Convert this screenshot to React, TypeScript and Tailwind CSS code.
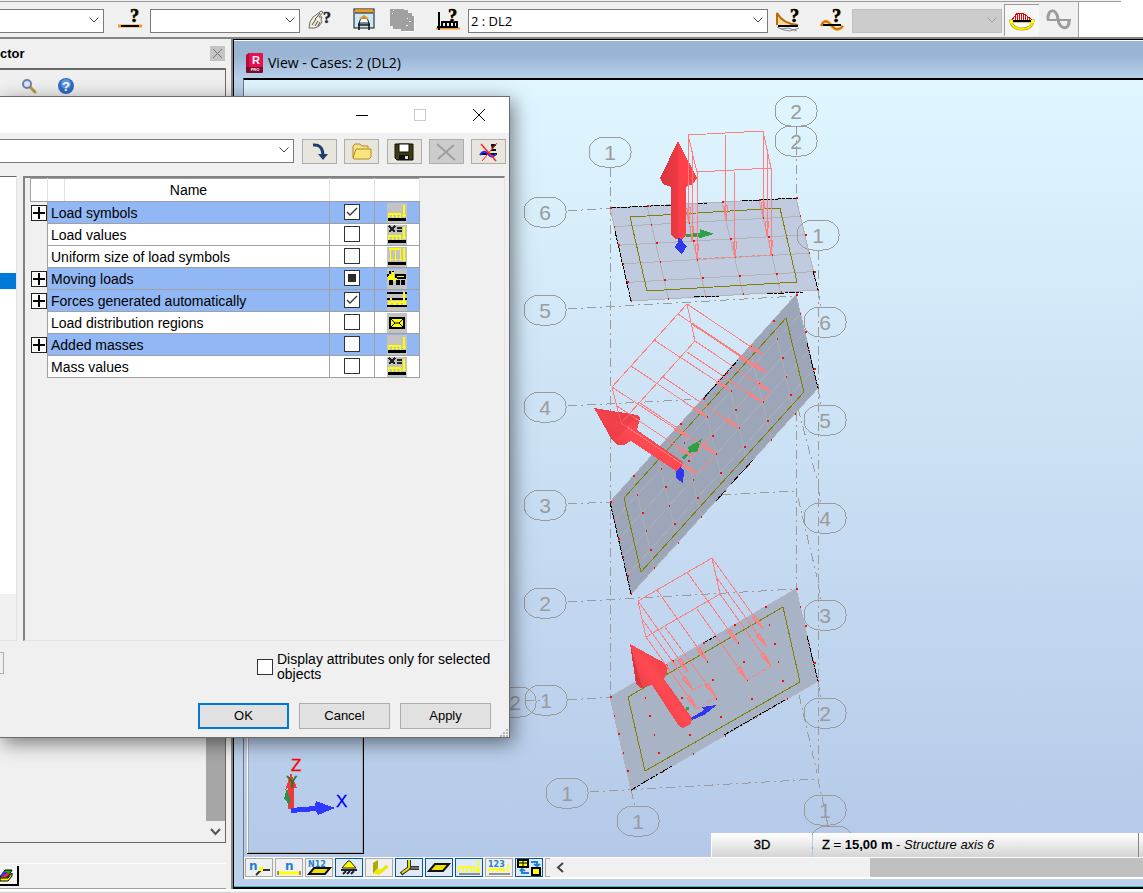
import { useState, type ReactNode } from "react";

type Point = [number, number];

const rows = [
  { name: "Load symbols", group: true, state: "on", icon: "load" },
  { name: "Load values", group: false, state: "off", icon: "values" },
  { name: "Uniform size of load symbols", group: false, state: "off", icon: "uniform" },
  { name: "Moving loads", group: true, state: "mixed", icon: "truck" },
  { name: "Forces generated automatically", group: true, state: "on", icon: "forces" },
  { name: "Load distribution regions", group: false, state: "off", icon: "region" },
  { name: "Added masses", group: true, state: "off", icon: "load" },
  { name: "Mass values", group: false, state: "off", icon: "values" },
];

const plates: {
  corners: [Point, Point, Point, Point];
  inner: string;
  fill: string;
  grid: string;
  nu: number;
  edges: string[];
}[] = [
  {
    corners: [[610, 208], [796, 198], [818, 290], [631, 301]],
    inner: "630,217 780,208 797,282 647,291",
    fill: "#c1cbe0",
    grid: "#b3b3b6",
    nu: 5,
    edges: ["M610 208L671 205", "M697 204L707 203", "M742 201L796 198", "M615 231L631 301", "M813 271L818 290", "M694 297L719 296", "M767 294L803 292"],
  },
  {
    corners: [[610, 502], [796, 295], [818, 388], [631, 594]],
    inner: "624,498 786,318 804,392 641,572",
    fill: "#9ca6b8",
    grid: "#a9adb6",
    nu: 8,
    edges: ["M703 399L738 360", "M610 502L631 594", "M807 343L818 388", "M753 460L731 484", "M725 491L716 501"],
  },
  {
    corners: [[610, 697], [796, 589], [818, 681], [631, 790]],
    inner: "628,697 783,607 800,682 645,771",
    fill: "#a9b3c6",
    grid: "#b0b3bb",
    nu: 6,
    edges: ["M703 643L716 636", "M807 636L818 681", "M631 790L672 766", "M724 735L785 700"],
  },
];

const bubbles: [string, number, number][] = [
  ["1", 610, 152], ["2", 796, 111], ["2", 796, 141], ["6", 545, 212], ["1", 818, 235],
  ["5", 545, 310], ["6", 825, 322], ["4", 545, 407], ["5", 825, 420], ["3", 545, 505],
  ["4", 825, 518], ["2", 545, 603], ["3", 825, 615], ["2", 515, 702], ["1", 546, 700],
  ["2", 825, 713], ["1", 567, 793], ["1", 638, 821], ["1", 825, 810], ["", 832, 841],
];

const axes =
  "M610 168V697M796 127V590M818 251V776M568 211L610 208M568 309L797 296M568 406L703 399" +
  "M568 504L610 502M722 495L796 491M568 602L796 589M568 700L610 697M525 700H545M590 792L818 779" +
  "M798 408L817 480M798 498L817 577M799 695L817 773M818 291L821 307M818 389L821 404M818 487L821 502" +
  "M818 584L821 600M818 682L821 697M818 779L828 825M631 790L635 806";

// start and tip of every load vector
const vectors: number[][] = [
  [688, 135, 689, 223], [692, 152, 692, 241], [697, 172, 697, 259], [725, 133, 726, 221],
  [734, 170, 735, 257], [763, 131, 763, 217], [767, 150, 767, 236], [771, 168, 771, 255],
  [687, 304, 763, 355], [692, 323, 767, 373], [693, 325, 767, 373], [695, 341, 771, 392], [678, 314, 754, 366],
  [654, 340, 730, 390], [631, 366, 707, 417], [612, 387, 688, 437], [617, 406, 693, 457],
  [621, 423, 697, 474], [687, 352, 762, 402], [663, 377, 739, 428], [640, 403, 716, 454],
  [712, 558, 763, 629], [717, 578, 767, 647], [720, 594, 771, 666], [687, 572, 738, 643],
  [657, 590, 707, 661], [638, 601, 688, 672], [642, 619, 693, 690], [646, 637, 697, 709],
  [665, 627, 716, 697], [697, 609, 747, 680],
];

function between(p: Point, q: Point, t: number): Point {
  return [p[0] + (q[0] - p[0]) * t, p[1] + (q[1] - p[1]) * t];
}

function Plate({ corners, inner, fill, grid, nu, edges }: (typeof plates)[number]) {
  const [a, b, c, d] = corners;
  const nv = 5;
  const lines: [Point, Point][] = [];
  const nodes: Point[] = [];
  for (let i = 0; i <= nu; i++) {
    const top = between(a, b, i / nu);
    const bottom = between(d, c, i / nu);
    lines.push([top, bottom]);
    for (let j = 0; j <= nv; j++) nodes.push(between(top, bottom, j / nv));
  }
  for (let j = 0; j <= nv; j++) {
    lines.push([between(a, d, j / nv), between(b, c, j / nv)]);
  }
  return (
    <g>
      <polygon points={corners.map((p) => p.join(",")).join(" ")} fill={fill} />
      {lines.map(([p, q], i) => (
        <line key={i} x1={p[0]} y1={p[1]} x2={q[0]} y2={q[1]} stroke={grid} />
      ))}
      <polygon points={inner} fill="none" stroke="#808000" />
      <path d={edges.join("")} stroke="#000" strokeDasharray="6 1 3 1" />
      {nodes.map(([x, y], i) => (
        <rect key={i} x={Math.round(x)} y={Math.round(y) - 1} width={i % 2 ? 1 : 2} height="2" fill="#e11" />
      ))}
    </g>
  );
}

function Vector({ v }: { v: number[] }) {
  const [x1, y1, x2, y2] = v;
  const len = Math.hypot(x2 - x1, y2 - y1);
  const ux = (x2 - x1) / len;
  const uy = (y2 - y1) / len;
  const bx = x2 - ux * 15;
  const by = y2 - uy * 15;
  return (
    <path
      d={`M${x1} ${y1}L${x2} ${y2}M${bx - uy * 2} ${by + ux * 2}L${bx + uy * 2} ${by - ux * 2}L${x2} ${y2}Z`}
    />
  );
}

function Model() {
  return (
    <svg width="899" height="777" viewBox="244 80 899 777" className="block" shapeRendering="crispEdges" fill="none">
      <defs>
        <linearGradient id="redUp" x1="0" x2="1" y1="0" y2="0">
          <stop offset="0" stopColor="#d8343e" />
          <stop offset="0.48" stopColor="#ee3a44" />
          <stop offset="0.52" stopColor="#ff4049" />
          <stop offset="1" stopColor="#fb3f48" />
        </linearGradient>
        <linearGradient id="redTilt" x1="0" x2="1" y1="1" y2="0">
          <stop offset="0.2" stopColor="#dd3640" />
          <stop offset="0.5" stopColor="#ff4a52" />
          <stop offset="0.8" stopColor="#e83842" />
        </linearGradient>
      </defs>
      <path d={axes} stroke="#9b9b9b" strokeDasharray="9 4 2 4" />
      {plates.map((p, i) => (
        <Plate key={i} {...p} />
      ))}
      {bubbles.map(([label, x, y], i) => (
        <g key={i}>
          <rect x={x - 21} y={y - 15} width="42" height="30" rx="16" ry="14" stroke="#9b9b9b" />
          {label && (
            <text x={x} y={y + 8} fontSize="21" textAnchor="middle" fill="#9b9b9b" fontFamily="Liberation Sans, sans-serif">
              {label}
            </text>
          )}
        </g>
      ))}

      <g fill="#d93640">
        <polygon points="678,141 660,178 663,184 671,187 671,234 675,239 682,239 686,235 686,187 693,184 697,178" fill="url(#redUp)" />
        <polygon points="594,408 637,415 640,418 637,430 683,462 681,469 676,471 631,441 624,445 618,445 612,440" fill="url(#redTilt)" />
        <polygon points="630,644 668,665 667,673 664,679 692,718 691,724 683,728 679,726 652,685 641,688 636,684" fill="url(#redTilt)" />
        <polygon points="630,644 642,687 636,684" />
      </g>
      <g fill="#2fa044">
        <polygon points="686,234 700,233 700,229 714,234 700,238 698,237 686,237" />
        <polygon points="682,458 689,450 688,447 702,439 697,452 691,452 684,460" />
        <rect x="686" y="707" width="3" height="3" />
      </g>
      <g fill="#3038ee">
        <polygon points="678,238 682,239 683,243 687,246 682,254 675,248 676,244 678,243" />
        <polygon points="676,471 680,467 684,471 683,483 676,478" />
        <polygon points="691,718 704,710 702,707 717,705 704,715 692,720" />
      </g>

      <g stroke="#ff7f7f">
        <path d="M688 135L763 131L771 168L697 172ZM612 387L687 304L695 341L621 423ZM638 601L712 558L720 594L646 637Z" />
        <path d="M697 259L771 255M716 454L697 474M771 392L762 402M697 709L716 697M747 680L771 666M693 690L707 683M693 457L712 436" strokeDasharray="4 2" />
        {vectors.map((v, i) => (
          <Vector key={i} v={v} />
        ))}
      </g>
      <polygon points="594,408 637,415 620,436 612,440" fill="#ea3c46" fillOpacity="0.6" />

      {/* axis triad */}
      <path d="M247 738V853" stroke="#fff" />
      <path d="M248 738V852H362V738" stroke="#aaa9a9" />
      <path d="M247 853H363V738" stroke="#000" />
      <polygon points="291,773 297,788 294,788 294,809 288,809 288,788 285,790" fill="#f0383f" />
      <polygon points="287,788 290,799 289,807 287,801 284,799" fill="#2f9040" />
      <polygon points="291,808 315,806 316,801 335,808 318,815 316,811 291,813" fill="#3038ff" />
      <g fontFamily="Liberation Sans, sans-serif" fontSize="17" strokeWidth="0.300">
        <text x="291" y="771" fill="#f00" stroke="#f00">Z</text>
        <text x="286" y="788" fill="#1b7a1b" stroke="#1b7a1b">Y</text>
        <text x="336" y="807" fill="#0000f0" stroke="#0000f0">X</text>
      </g>
    </svg>
  );
}

function Combo({ label, value, disabled, className }: { label: string; value?: string; disabled?: boolean; className: string }) {
  return (
    <div className={`relative h-6 shrink-0 ${className}`}>
      <select
        aria-label={label}
        disabled={disabled}
        className="h-full w-full appearance-none border border-[#7a7a7a] bg-white pl-[2px] text-[13px] leading-5 text-black disabled:border-[#bfbfbf] disabled:bg-[#cccccc]"
      >
        <option>{value ?? ""}</option>
      </select>
      <svg
        width="10"
        height="6"
        viewBox="0 0 10 6"
        fill="none"
        stroke={disabled ? "#a0a0a0" : "#444"}
        className="pointer-events-none absolute right-[5px] top-[9px]"
      >
        <path d="M.5 .5L5 5L9.500 .5" />
      </svg>
    </div>
  );
}

function Question({ x = 12 }: { x?: number }) {
  return (
    <g fontFamily="Liberation Serif, serif" fontSize="18" fontWeight="bold">
      <text x={x + 1} y="14" fill="#f39a1e">?</text>
      <text x={x} y="14" fill="#000" stroke="#000" strokeWidth="0.500">?</text>
    </g>
  );
}

function ToolButton({ label, className, children }: { label: string; className: string; children: ReactNode }) {
  return (
    <button aria-label={label} className={`flex h-8 shrink-0 items-center ${className}`}>
      <svg width="24" height="24" viewBox="0 0 24 24" fill="none" className="shrink-0 overflow-visible">
        {children}
      </svg>
    </button>
  );
}

function Toolbar() {
  return (
    <header className="h-[39px] shrink-0 border-b-2 border-[#858585] bg-white">
      <div className="h-[2px] w-[1121px] border-b border-[#9b9b9b] bg-[#f0f0f0]" />
      <div className="flex h-[35px] w-[1079px] items-center border-r border-[#a0a0a0] bg-[#f0f0f0]">
        <Combo label="Nodes" className="w-[104px] [&>select]:border-l-0" />
        <ToolButton label="Select bars" className="w-[46px] justify-end pr-2">
          <path d="M0 18h24" stroke="#f39a1e" strokeWidth="3" />
          <path d="M3 18h18" stroke="#000" strokeWidth="2" />
          <Question />
        </ToolButton>
        <Combo label="Bars" className="w-[150px]" />
        <ToolButton label="Pick by query" className="w-[46px] pl-2">
          <path d="M1 20L2 14L5 9L8 7L13 3L15 4L11 9L14 9L13 12L14 14L11 18L7 20Z" fill="#efece0" stroke="#6d6b60" />
          <path d="M4 17L8 11M7 18L10 13M9 9L7 11M10 18L12 14M12 5L9 9" stroke="#4c4b43" />
          <text x="15" y="15" fontFamily="Liberation Serif, serif" fontSize="16" fontWeight="bold" fill="#222" stroke="#222" strokeWidth="0.500">?</text>
        </ToolButton>
        <ToolButton label="Restore view" className="w-9 justify-center">
          <rect x="2" y="1" width="20" height="19" fill="#c9eafa" stroke="#111" />
          <path d="M3 3h18" stroke="#f39a1e" strokeWidth="3" />
          <path d="M3 5h18" stroke="#111" />
          <path d="M6 17h12M7 15v7M17 15v7" stroke="#111" strokeWidth="1.500" />
          <path d="M7 15L9 10H15L17 15Z" fill="#fff" stroke="#111" />
          <path d="M8 11L12 8L16 11" stroke="#f39a1e" strokeWidth="2" />
        </ToolButton>
        <ToolButton label="Selection filter" className="w-10 justify-center">
          <g shapeRendering="crispEdges">
            <path d="M1 1H14V2H18V5H22V8H24V23H11V21H3V18H0V1Z" fill="#a0a0a0" />
            <path d="M2 5h1M3 2h1M17 10h1M19 13h2M16 17h2M12 23h12V8" stroke="#fff" />
          </g>
        </ToolButton>
        <ToolButton label="Load cases" className="w-[46px] justify-end pr-2">
          <path d="M0 20.500h24" stroke="#f39a1e" strokeWidth="2" />
          <path d="M3 4V22M1 19H22M6 19V14H21V19M10 14V19M14 14V19M18 14V19" stroke="#000" strokeWidth="2" />
          <Question />
        </ToolButton>
        <Combo label="Load case" value="2 : DL2" className="w-[300px] font-['Open_Sans',sans-serif]" />
        <ToolButton label="Result diagrams" className="w-[46px] pl-2">
          <path d="M1 17V5Q7 16 22 17" stroke="#b96c00" strokeWidth="2" fill="#f7d9a0" />
          <path d="M1 19L8 22L14 23L23 20M5 21L12 20L21 23" stroke="#8b8b8b" />
          <path d="M2 18h20" stroke="#000" strokeWidth="2" />
          <Question x={14} />
        </ToolButton>
        <ToolButton label="Mode shapes" className="w-[38px] justify-end pr-2">
          <path d="M1 18Q5 9 11 17T23 18" stroke="#f39a1e" strokeWidth="3" />
          <path d="M1 18Q5 9 11 17T23 18" stroke="#a06000" />
          <path d="M3 17h18" stroke="#000" strokeWidth="2" />
          <Question />
        </ToolButton>
        <Combo label="Mode" disabled className="w-[150px]" />
        <ToolButton label="Static results" className="ml-[2px] w-[35px] justify-center border-l border-t border-[#9b9b9b] bg-[#f6f6f6]">
          <path d="M1 13Q2 21 12 21T23 13Z" fill="#fff" stroke="#b0a000" strokeWidth="3" />
          <path d="M1 13Q2 21 12 21T23 13" stroke="#f4e800" strokeWidth="2" />
          <g shapeRendering="crispEdges">
            <path d="M2 12L7 5H13L22 12Z" fill="#fff" stroke="#e00" />
            <path d="M5.500 8V12M7.500 5V12M9.500 5V12M11.500 5V12M13.500 5V12M15.500 7V12M17.500 8V12M19.500 10V12" stroke="#e00" />
            <path d="M2 13h20" stroke="#000" strokeWidth="2" />
            <path d="M0 13h3M21 13h3" stroke="#ff0" strokeWidth="3" />
          </g>
        </ToolButton>
        <ToolButton label="Dynamic results" className="w-[39px] justify-center">
          <path d="M1 12C0 0 10 0 11 11S23 23 22 12" stroke="#9b9b9b" strokeWidth="3" />
          <path d="M0 12h24" stroke="#9b9b9b" strokeWidth="2" />
        </ToolButton>
      </div>
    </header>
  );
}

function Inspector() {
  return (
    <aside className="flex w-[233px] shrink-0 flex-col border-r-2 border-[#858585] bg-[#f0f0f0] pr-[5px]">
      <div className="flex h-[29px] items-center justify-between pr-px">
        <h2 className="text-[13px] font-bold">ctor</h2>
        <button aria-label="Close inspector" className="flex size-[15px] items-center justify-center bg-[#c4c4c4]">
          <svg width="11" height="11" viewBox="0 0 11 11" stroke="#777">
            <path d="M1 1L10 10M10 1L1 10" />
          </svg>
        </button>
      </div>
      <div className="flex min-h-0 flex-1 flex-col border-r border-t-2 border-[#696969]">
        <div className="flex h-8 shrink-0 items-center gap-5 pl-[21px]">
          <button aria-label="Find">
            <svg width="17" height="17" viewBox="0 0 17 17">
              <path d="M9 9L14 14" stroke="#b99b3a" strokeWidth="3" strokeLinecap="round" />
              <circle cx="6" cy="6" r="4" fill="#d9e9fb" stroke="#7080a8" strokeWidth="2" />
            </svg>
          </button>
          <button aria-label="Help">
            <svg width="17" height="17" viewBox="0 0 17 17">
              <circle cx="8" cy="8" r="8" fill="#2f6cc4" />
              <circle cx="8" cy="6" r="5" fill="#5d97e2" />
              <text x="8" y="13" textAnchor="middle" fontSize="13" fontWeight="bold" fill="#fff" fontFamily="Liberation Sans, sans-serif">?</text>
            </svg>
          </button>
        </div>
        <div className="flex min-h-0 flex-1 justify-end">
          <div className="flex w-[19px] flex-col bg-[#f0f0f0]">
            <div className="flex-1 bg-[#a6a6a6]" />
            <button aria-label="Scroll down" className="flex h-[21px] items-center justify-center">
              <svg width="11" height="8" viewBox="0 0 11 8" fill="none" stroke="#555" strokeWidth="2">
                <path d="M1 1L5.500 6L10 1" />
              </svg>
            </button>
          </div>
        </div>
      </div>
      <div className="h-[22px] border-b border-t border-b-white border-t-[#696969]" />
      <div className="h-6 pt-[2px]">
        <button aria-label="Geometry" className="flex h-5 w-[19px] items-center border-b-2 border-r-2 border-black bg-[#f4f4f4]">
          <svg width="13" height="13" viewBox="0 0 13 13">
            <path d="M0 9H8L12 4V7L8 12H0Z" fill="#ffee00" stroke="#000" />
            <path d="M0 8L5 1H12L8 8Z" fill="#12b422" stroke="#000" />
            <path d="M0 7L3 3H8L5 7Z" fill="#3333dd" />
            <path d="M1 8L8 3L9 5L6 8Z" fill="#e22" />
          </svg>
        </button>
      </div>
      <div className="border-b border-[#a0a0a0]" />
    </aside>
  );
}

const displayButtons: { label: string; active: boolean; icon: ReactNode }[] = [
  {
    label: "Node numbers",
    active: false,
    icon: (
      <>
        <text x="2" y="11" fontSize="12" fontWeight="bold" fill="#1e82d2">n</text>
        <path d="M9 16L14 11H23" stroke="#333" strokeWidth="2" />
        <rect x="12" y="8" width="4" height="4" fill="#ff0" />
      </>
    ),
  },
  {
    label: "Bar numbers",
    active: false,
    icon: (
      <>
        <text x="8" y="11" fontSize="12" fontWeight="bold" fill="#1e82d2">n</text>
        <path d="M1 14h22" stroke="#ff0" strokeWidth="3" />
        <path d="M1 12v4M23 12v4" stroke="#333" />
      </>
    ),
  },
  {
    label: "Panel numbers",
    active: false,
    icon: (
      <>
        <path d="M2 15L7 9H23L18 15Z" fill="#eee000" stroke="#111" strokeWidth="2" />
        <text x="1" y="8" fontSize="8" fontWeight="bold" fill="#1e82d2">N12</text>
      </>
    ),
  },
  {
    label: "Supports",
    active: true,
    icon: (
      <>
        <path d="M5 9L11 2H13L19 9Z" fill="#ff0" stroke="#222" />
        <path d="M4 11h16M6 15L9 12M10 15L13 12M14 15L17 12" stroke="#222" strokeWidth="2" />
      </>
    ),
  },
  {
    label: "Section shape",
    active: false,
    icon: (
      <>
        <path d="M6 4L11 1V9L6 15Z" fill="#b0aa00" />
        <path d="M11 9L13 11L19 6L22 8L12 16L6 14Z" fill="#f0e800" />
      </>
    ),
  },
  {
    label: "Local systems",
    active: true,
    icon: (
      <>
        <path d="M12 1V9H22M12 9L4 15" stroke="#333" strokeWidth="4" />
        <path d="M12 1V9M12 9L5 14" stroke="#e6df00" strokeWidth="2" />
        <path d="M14 9H22" stroke="#aaa" />
      </>
    ),
  },
  { label: "Panel thickness", active: true, icon: <path d="M2 12L8 5H22L16 12Z" fill="#eee000" stroke="#111" strokeWidth="2" /> },
  {
    label: "Load symbols",
    active: true,
    icon: (
      <>
        <path d="M2 13V8H17V13M6 8V13M10 8V13M14 8V13M21 1V13M19 10L21 13L23 10" stroke="#ff0" strokeWidth="1.500" />
        <path d="M2 15h21" stroke="#333" />
      </>
    ),
  },
  {
    label: "Load values",
    active: false,
    icon: (
      <>
        <path d="M2 13V10H17V13M6 10V13M10 10V13M14 10V13M21 5V13" stroke="#ff0" strokeWidth="1.500" />
        <path d="M2 15h21" stroke="#333" />
        <text x="1" y="8" fontSize="8" fontWeight="bold" fill="#1e82d2">123</text>
      </>
    ),
  },
  {
    label: "Switch views",
    active: true,
    icon: (
      <>
        <rect x="1" y="1" width="10" height="7" fill="#ff0" stroke="#000" strokeWidth="2" />
        <path d="M1 4h10M6 1v7" stroke="#000" />
        <rect x="15" y="9" width="8" height="7" fill="#ff0" stroke="#000" strokeWidth="2" />
        <path d="M14 3H20V6M17 5L20 7L23 5M12 14H5V11M3 12L5 10L8 12" stroke="#1e82d2" strokeWidth="2" />
      </>
    ),
  },
];

function ViewWindow() {
  return (
    <section className="flex min-w-0 flex-1 flex-col border-b-2 border-l border-t border-black bg-[#b9d1ea]">
      <div className="flex h-[38px] shrink-0 items-center gap-[5px] border-t border-white bg-gradient-to-b from-[#9ab5d4] from-40% to-[#b8d0ec] pl-3 pt-[6px]">
        <svg width="17" height="20" viewBox="0 0 17 20">
          <path d="M0 2L3 0H16Q17 0 17 1V19L16 20H1Q0 20 0 19Z" fill="#e51050" />
          <path d="M0 2L3 0V14L0 16Z" fill="#b40b3c" />
          <path d="M0 14H17V19L16 20H1L0 19Z" fill="#7c0c2e" />
          <text x="10" y="11" fontSize="11" fontWeight="bold" textAnchor="middle" fill="#fff">R</text>
          <text x="9" y="18" fontSize="4" fontWeight="bold" textAnchor="middle" fill="#fff">PRO</text>
        </svg>
        <h1 className="font-['Open_Sans',sans-serif] text-sm">View - Cases: 2 (DL2)</h1>
      </div>
      <div className="ml-[9px] flex min-h-0 flex-1 flex-col border-l border-t-2 border-l-[#777] border-t-black">
        <div className="relative min-h-0 flex-1 overflow-hidden bg-gradient-to-b from-[#e0f6ff] to-[#b4c9e8]">
          <Model />
          <div className="absolute bottom-0 right-0 flex h-6 w-[432px] text-[13px] leading-6">
            <div className="w-[101px] border-l border-white bg-gradient-to-b from-white to-[#d4d4d4] text-center font-medium [-webkit-text-stroke:0.3px]">
              3D
            </div>
            <div className="ml-px flex-1 border-r border-[#888] bg-gradient-to-b from-white to-[#d4d4d4] pl-[9px]">
              <span className="[-webkit-text-stroke:0.3px]">Z = </span>
              <b>15,00 m</b> - <i>Structure axis 6</i>
            </div>
            <div className="w-1 bg-gradient-to-b from-white to-[#d4d4d4]" />
          </div>
        </div>
        <div className="flex h-[22px] shrink-0 items-center border-b-2 border-t border-white bg-[#f0f0f0]">
          <div className="flex gap-[2px] pl-px">
            {displayButtons.map((b) => (
              <button
                key={b.label}
                aria-label={b.label}
                className={`flex h-[19px] w-7 items-center justify-center border ${b.active ? "border-[#0a559c] bg-[#dfeaf6]" : "border-[#a8a8a8] bg-[#f0f0f0]"}`}
              >
                <svg width="24" height="17" viewBox="0 0 24 17" fill="none" fontFamily="DejaVu Sans, sans-serif" className="overflow-visible">
                  {b.icon}
                </svg>
              </button>
            ))}
          </div>
          <div className="ml-[2px] h-[19px] w-[5px] border-y border-l border-[#a8a8a8]" />
          <button aria-label="Scroll left" className="flex w-5 justify-center">
            <svg width="8" height="11" viewBox="0 0 8 11" fill="none" stroke="#444" strokeWidth="2">
              <path d="M7 1L2 5.500L7 10" />
            </svg>
          </button>
          <div className="h-[19px] flex-1">
            <div className="ml-auto h-full w-[273px] bg-[#c0c0c0]" />
          </div>
        </div>
      </div>
      <div className="h-[8px] shrink-0 border-b border-[#2cc4dc]" />
    </section>
  );
}

function RowIcon({ kind }: { kind: string }) {
  return (
    <svg width="20" height="20" viewBox="0 0 20 20" fill="none" shapeRendering="crispEdges" className="mx-auto">
      <rect width="20" height="20" fill="#c3c3c3" />
      {(kind === "load" || kind === "values") && (
        <>
          <path d="M1 16.500h18" stroke="#000" strokeWidth="3" />
          <path d="M1 11H14M17 2V14" stroke="#ff0" strokeWidth="2" />
          <path d="M1.500 11V15M5.500 11V15M9.500 11V15M13.500 11V15M15 12.500h4" stroke="#ff0" />
          <path d="M1 13.500h2M5 13.500h2M9 13.500h2M12 13.500h2" stroke="#ff0" />
        </>
      )}
      {kind === "values" && <path d="M2 1L8 7M8 1L2 7M10 3h5M10 6h5" stroke="#222" strokeWidth="1.500" />}
      {kind === "uniform" && (
        <>
          <path d="M2 2H14M17 1V14" stroke="#ff0" strokeWidth="2" />
          <path d="M3.500 2V14M8.500 2V14M13.500 2V14M2 12.500h4M7 12.500h4M12 12.500h3M16 12.500h3" stroke="#ff0" />
          <path d="M1 16.500h18" stroke="#000" strokeWidth="3" />
        </>
      )}
      {kind === "truck" && (
        <>
          <path d="M1 5V8M3 2V5M6 2V5" stroke="#000" strokeWidth="2" />
          <path d="M2 6H7V12H1V8Z" fill="#ff0" />
          <path d="M5 3H7V7H5Z" fill="#ff0" />
          <rect x="9" y="6" width="9" height="3" fill="#ff0" stroke="#000" strokeWidth="2" />
          <path d="M7 10h3" stroke="#ff0" strokeWidth="3" />
          <rect x="3" y="12" width="2" height="3" fill="#ff0" stroke="#000" strokeWidth="2" />
          <rect x="10" y="12" width="2" height="3" fill="#ff0" stroke="#000" strokeWidth="2" />
          <rect x="15" y="12" width="2" height="3" fill="#ff0" stroke="#000" strokeWidth="2" />
        </>
      )}
      {kind === "forces" && (
        <>
          <path d="M0 2h20M0 8h20M0 15h20" stroke="#000" strokeWidth="2" />
          <path d="M1 11H19M17 1V11" stroke="#ff0" strokeWidth="2" />
          <path d="M1 13h3M6 13h3M11 13h3M16 13h3M3 8h2" stroke="#ff0" strokeWidth="2" />
        </>
      )}
      {kind === "region" && (
        <>
          <rect x="3" y="5" width="14" height="10" fill="#ff0" stroke="#000" strokeWidth="2" />
          <path d="M3 5L8 10L3 15M17 5L12 10L17 15M8 10h4" stroke="#000" shapeRendering="auto" />
        </>
      )}
    </svg>
  );
}

function CheckBox({ id, label, state, onToggle }: { id?: string; label?: string; state: string; onToggle: () => void }) {
  return (
    <span className="relative block size-4 shrink-0">
      <input
        id={id}
        type="checkbox"
        aria-label={label}
        checked={state === "on"}
        onChange={onToggle}
        className="block size-4 appearance-none border border-[#333] bg-white"
      />
      {state === "on" && (
        <svg width="16" height="16" viewBox="0 0 16 16" fill="none" stroke="#333" className="pointer-events-none absolute inset-0">
          <path d="M3 8L6 11L13 4" strokeWidth="1.300" />
        </svg>
      )}
      {state === "mixed" && <span className="pointer-events-none absolute inset-1 bg-[#2b2b2b]" />}
    </span>
  );
}

const dialogTools: { label: string; disabled?: boolean; icon: ReactNode }[] = [
  {
    label: "Apply template",
    icon: (
      <>
        <path d="M3 3Q12 2 13 12" stroke="#1f3b70" strokeWidth="3" />
        <path d="M8 12H18L13 18Z" fill="#1f3b70" />
      </>
    ),
  },
  {
    label: "Open template",
    icon: (
      <>
        <path d="M1 16V4L3 2H8L10 4H16V8" fill="#f5e18c" stroke="#b38a1c" />
        <path d="M1 16L4 7H19V15L17 17H2Z" fill="#f9e57e" stroke="#b38a1c" />
      </>
    ),
  },
  {
    label: "Save template",
    icon: (
      <>
        <path d="M1 2H19V18H3L1 16Z" fill="#3c3c10" stroke="#111" />
        <rect x="5" y="2" width="10" height="8" fill="#fff" stroke="#111" />
        <rect x="5" y="13" width="10" height="5" fill="#111" />
        <rect x="11" y="14" width="3" height="3" fill="#ddd" />
      </>
    ),
  },
  { label: "Delete template", disabled: true, icon: <path d="M1 2L19 18M18 3L2 17" stroke="#9e9e9e" strokeWidth="2" /> },
  {
    label: "Hide symbols",
    icon: (
      <>
        <path d="M2 12H18M12 3H17M12 8H17" stroke="#111" strokeWidth="2" />
        <path d="M12 3H17L13 8" fill="#111" />
        <path d="M1 13Q5 7 9 12T17 12" stroke="#22f" strokeWidth="2" />
        <path d="M18 1L3 19" stroke="#f22" />
        <path d="M2 2L17 19" stroke="#f22" strokeWidth="1.500" />
      </>
    ),
  },
];

function DisplayDialog() {
  const [states, setStates] = useState(rows.map((r) => r.state));
  const [onlySelected, setOnlySelected] = useState("off");

  const toggle = (i: number) =>
    setStates(states.map((s, n) => (n === i ? (s === "on" ? "off" : "on") : s)));

  return (
    <div
      role="dialog"
      aria-label="Display"
      className="absolute left-0 top-24 flex h-[642px] w-[510px] flex-col border-y border-r border-[#6b6b6b] bg-[#f0f0f0] shadow-[3px_5px_18px_rgba(0,0,0,0.5)]"
    >
      <div className="flex h-9 shrink-0 items-center justify-end bg-white">
        <button aria-label="Minimize" className="flex w-[58px] justify-center">
          <svg width="12" height="12" viewBox="0 0 12 12" stroke="#000" shapeRendering="crispEdges">
            <path d="M0 6h12" />
          </svg>
        </button>
        <button aria-label="Maximize" disabled className="flex w-[58px] justify-center">
          <span className="size-3 border border-[#ccc]" />
        </button>
        <button aria-label="Close" className="flex w-[60px] justify-center">
          <svg width="12" height="12" viewBox="0 0 12 12" stroke="#000">
            <path d="M0 0L12 12M12 0L0 12" />
          </svg>
        </button>
      </div>
      <div className="flex h-[43px] shrink-0 gap-2 pr-[3px] pt-[5px]">
        <Combo label="Template" className="w-[294px] [&>select]:border-l-0" />
        <div className="flex flex-1 justify-between pt-px">
          {dialogTools.map((t) => (
            <button
              key={t.label}
              aria-label={t.label}
              disabled={t.disabled}
              className="flex h-[25px] w-[35px] items-center justify-center border border-[#adadad] bg-[#e8e6dc] disabled:bg-[#cccccc]"
            >
              <svg width="20" height="20" viewBox="0 0 20 20" fill="none">
                {t.icon}
              </svg>
            </button>
          ))}
        </div>
      </div>

      <div className="flex min-h-0 flex-1 gap-[6px] pr-1">
        <div className="flex w-[17px] flex-col border-b border-r border-t border-b-[#e3e3e3] border-r-[#e3e3e3] border-t-[#696969]">
          <div className="h-[417px] bg-white pt-[96px]">
            <div className="h-4 bg-[#0078d7]" />
          </div>
        </div>
        <div className="flex-1 border-2 border-b border-r border-b-[#e3e3e3] border-l-[#828282] border-r-[#e3e3e3] border-t-[#828282] pl-[5px]">
          <table className="w-[390px] table-fixed border-collapse text-sm leading-5">
            <colgroup>
              <col className="w-[17px]" />
              <col />
              <col className="w-[45px]" />
              <col className="w-[45px]" />
            </colgroup>
            <thead>
              <tr className="h-[23px] bg-white">
                <th className="border border-[#a0a0a0] border-r-[#e3e3e3]" />
                <th className="relative border border-[#e3e3e3] border-b-[#a0a0a0] border-t-[#a0a0a0] p-0 font-normal">
                  <span className="absolute inset-y-0 left-4 w-px bg-[#e3e3e3]" />
                  Name
                </th>
                <th className="border border-[#e3e3e3] border-b-[#a0a0a0] border-t-[#a0a0a0]" />
                <th className="border border-[#e3e3e3] border-b-[#a0a0a0] border-t-[#a0a0a0]" />
              </tr>
            </thead>
            <tbody>
              {rows.map((row, i) => (
                <tr key={row.name} className="h-[22px]">
                  <td className="p-0">
                    {row.group && (
                      <button
                        aria-label={`Expand ${row.name}`}
                        className="flex size-4 items-center justify-center border border-[#222] bg-white"
                      >
                        <svg width="14" height="14" viewBox="0 0 14 14" stroke="#000" strokeWidth="2" shapeRendering="crispEdges">
                          <path d="M1 7h12M7 1v12" />
                        </svg>
                      </button>
                    )}
                  </td>
                  <td className={`border border-[#a0a0a0] p-0 pl-[3px] ${row.group ? "bg-[#91b7f5]" : "bg-white"}`}>
                    {row.name}
                  </td>
                  <td className={`border border-[#a0a0a0] p-0 pb-px ${row.group ? "bg-[#91b7f5]" : "bg-white"}`}>
                    <div className="flex justify-center">
                      <CheckBox label={row.name} state={states[i]} onToggle={() => toggle(i)} />
                    </div>
                  </td>
                  <td className={`border border-[#a0a0a0] p-0 ${row.group ? "bg-[#91b7f5]" : "bg-white"}`}>
                    <RowIcon kind={row.icon} />
                  </td>
                </tr>
              ))}
            </tbody>
          </table>
        </div>
      </div>

      <div className="relative flex h-24 shrink-0 flex-col items-end justify-between pb-2 pr-[14px] pt-[11px]">
        <button aria-label="Change order" className="absolute left-0 top-[11px] h-[22px] w-1 border border-l-0 border-[#adadad]" />
        <div className="flex w-[238px] items-center gap-1">
          <CheckBox id="only-selected" state={onlySelected} onToggle={() => setOnlySelected(onlySelected === "on" ? "off" : "on")} />
          <label htmlFor="only-selected" className="text-sm leading-[15px]">
            Display attributes only for selected objects
          </label>
        </div>
        <div className="flex gap-[10px] pr-1 text-[13px]">
          <button className="h-[26px] w-[91px] border-2 border-[#0078d7] bg-[#e1e1e1]">OK</button>
          <button className="h-[26px] w-[91px] border border-[#adadad] bg-[#e1e1e1]">Cancel</button>
          <button className="h-[26px] w-[91px] border border-[#adadad] bg-[#e1e1e1]">Apply</button>
        </div>
        <svg width="9" height="9" viewBox="0 0 9 9" fill="#b4b4b4" className="absolute bottom-0 right-0">
          <path d="M0 7h2v2H0zM3 7h2v2H3zM6 7h2v2H6zM3 4h2v2H3zM6 4h2v2H6zM6 1h2v2H6z" />
        </svg>
      </div>
    </div>
  );
}

export default function App() {
  return (
    <div className="relative flex h-screen flex-col overflow-hidden bg-[#f0f0f0] font-['Liberation_Sans',Arial,sans-serif] text-black">
      <Toolbar />
      <main className="flex min-h-0 flex-1">
        <Inspector />
        <ViewWindow />
      </main>
      <footer className="h-1 shrink-0 border-b border-t-2 border-b-[#d8d8d8] border-t-white" />
      <DisplayDialog />
    </div>
  );
}
